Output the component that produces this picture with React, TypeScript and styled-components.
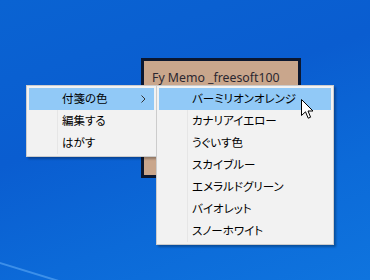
import React from 'react';
import styled, { createGlobalStyle } from 'styled-components';

const GlobalStyle = createGlobalStyle`
  html, body {
    margin: 0;
    padding: 0;
  }
  body {
    font-family: "Noto Sans CJK JP", "Noto Sans", sans-serif;
  }
`;

// Desktop wallpaper, free canvas for windows
const Desktop = styled.div`
  position: relative;
  width: 370px;
  height: 280px;
  overflow: hidden;
  background: linear-gradient(160deg, #0a63d2 0%, #0a5dd0 40%, #0c6ad8 70%, #0f74de 100%);
`;

const Streak = styled.div`
  position: absolute;
  left: -10px;
  top: 259px;
  width: 80px;
  height: 2px;
  background: rgba(120, 190, 255, 0.45);
  transform: rotate(17deg);
  transform-origin: left center;
`;

const MemoWindow = styled.div`
  position: absolute;
  left: 141px;
  top: 58px;
  width: 160px;
  height: 120px;
  box-sizing: border-box;
  background: #c9a68c;
  border: 3px solid #0b1730;
  padding: 8px 0 0 8px;
  font-family: "Noto Sans", "Open Sans", sans-serif;
  font-size: 12.3px;
  line-height: 18px;
  color: #2b2630;
  white-space: nowrap;
  overflow: hidden;
`;

const Menu = styled.div<{ $left: number; $top: number; $width: number }>`
  position: absolute;
  left: ${(p) => p.$left}px;
  top: ${(p) => p.$top}px;
  width: ${(p) => p.$width}px;
  box-sizing: border-box;
  background: #f2f2f2;
  border: 1px solid #cccccc;
  padding: 2px 0;
  display: flex;
  flex-direction: column;
  box-shadow: 2px 2px 2px rgba(0, 0, 0, 0.28);
`;

const Gutter = styled.div`
  position: absolute;
  left: 30px;
  top: 2px;
  bottom: 2px;
  width: 1px;
  background: #e6e6e6;
`;

const Item = styled.div<{ $active?: boolean }>`
  position: relative;
  height: 22px;
  box-sizing: border-box;
  margin: 0 2px;
  padding: 0 8px 3px 33px;
  display: flex;
  align-items: center;
  justify-content: space-between;
  font-size: 11.5px;
  font-feature-settings: "palt";
  color: #000;
  background: ${(p) => (p.$active ? '#91c9f7' : 'transparent')};
  white-space: nowrap;
`;

const Chevron = () => (
  <svg width="5" height="8" viewBox="0 0 5 8" style={{ marginTop: 3 }}>
    <path d="M0.5 0.5 L4 4 L0.5 7.5" fill="none" stroke="#333" strokeWidth="1" />
  </svg>
);

const Cursor = styled.svg`
  position: absolute;
  left: 301px;
  top: 99px;
`;

const colors = [
  'バーミリオンオレンジ',
  'カナリアイエロー',
  'うぐいす色',
  'スカイブルー',
  'エメラルドグリーン',
  'バイオレット',
  'スノーホワイト',
];

export default function App() {
  return (
    <>
      <GlobalStyle />
      <Desktop>
        <Streak />
        <MemoWindow>Fy Memo _freesoft100</MemoWindow>
        <Menu $left={26} $top={85} $width={131}>
          <Gutter />
          <Item $active>
            <span>付箋の色</span>
            <Chevron />
          </Item>
          <Item>編集する</Item>
          <Item>はがす</Item>
        </Menu>
        <Menu $left={156} $top={85} $width={178}>
          <Gutter />
          {colors.map((c, i) => (
            <Item key={c} $active={i === 0}>
              {c}
            </Item>
          ))}
        </Menu>
        <Cursor width="13" height="21" viewBox="0 0 13 21">
          <path
            d="M0.5 0.5 L0.5 16.5 L4.5 12.8 L7.2 19.2 L9.6 18.2 L7 12 L12 12 Z"
            fill="#fff"
            stroke="#000"
            strokeWidth="1"
            strokeLinejoin="miter"
          />
        </Cursor>
      </Desktop>
    </>
  );
}
